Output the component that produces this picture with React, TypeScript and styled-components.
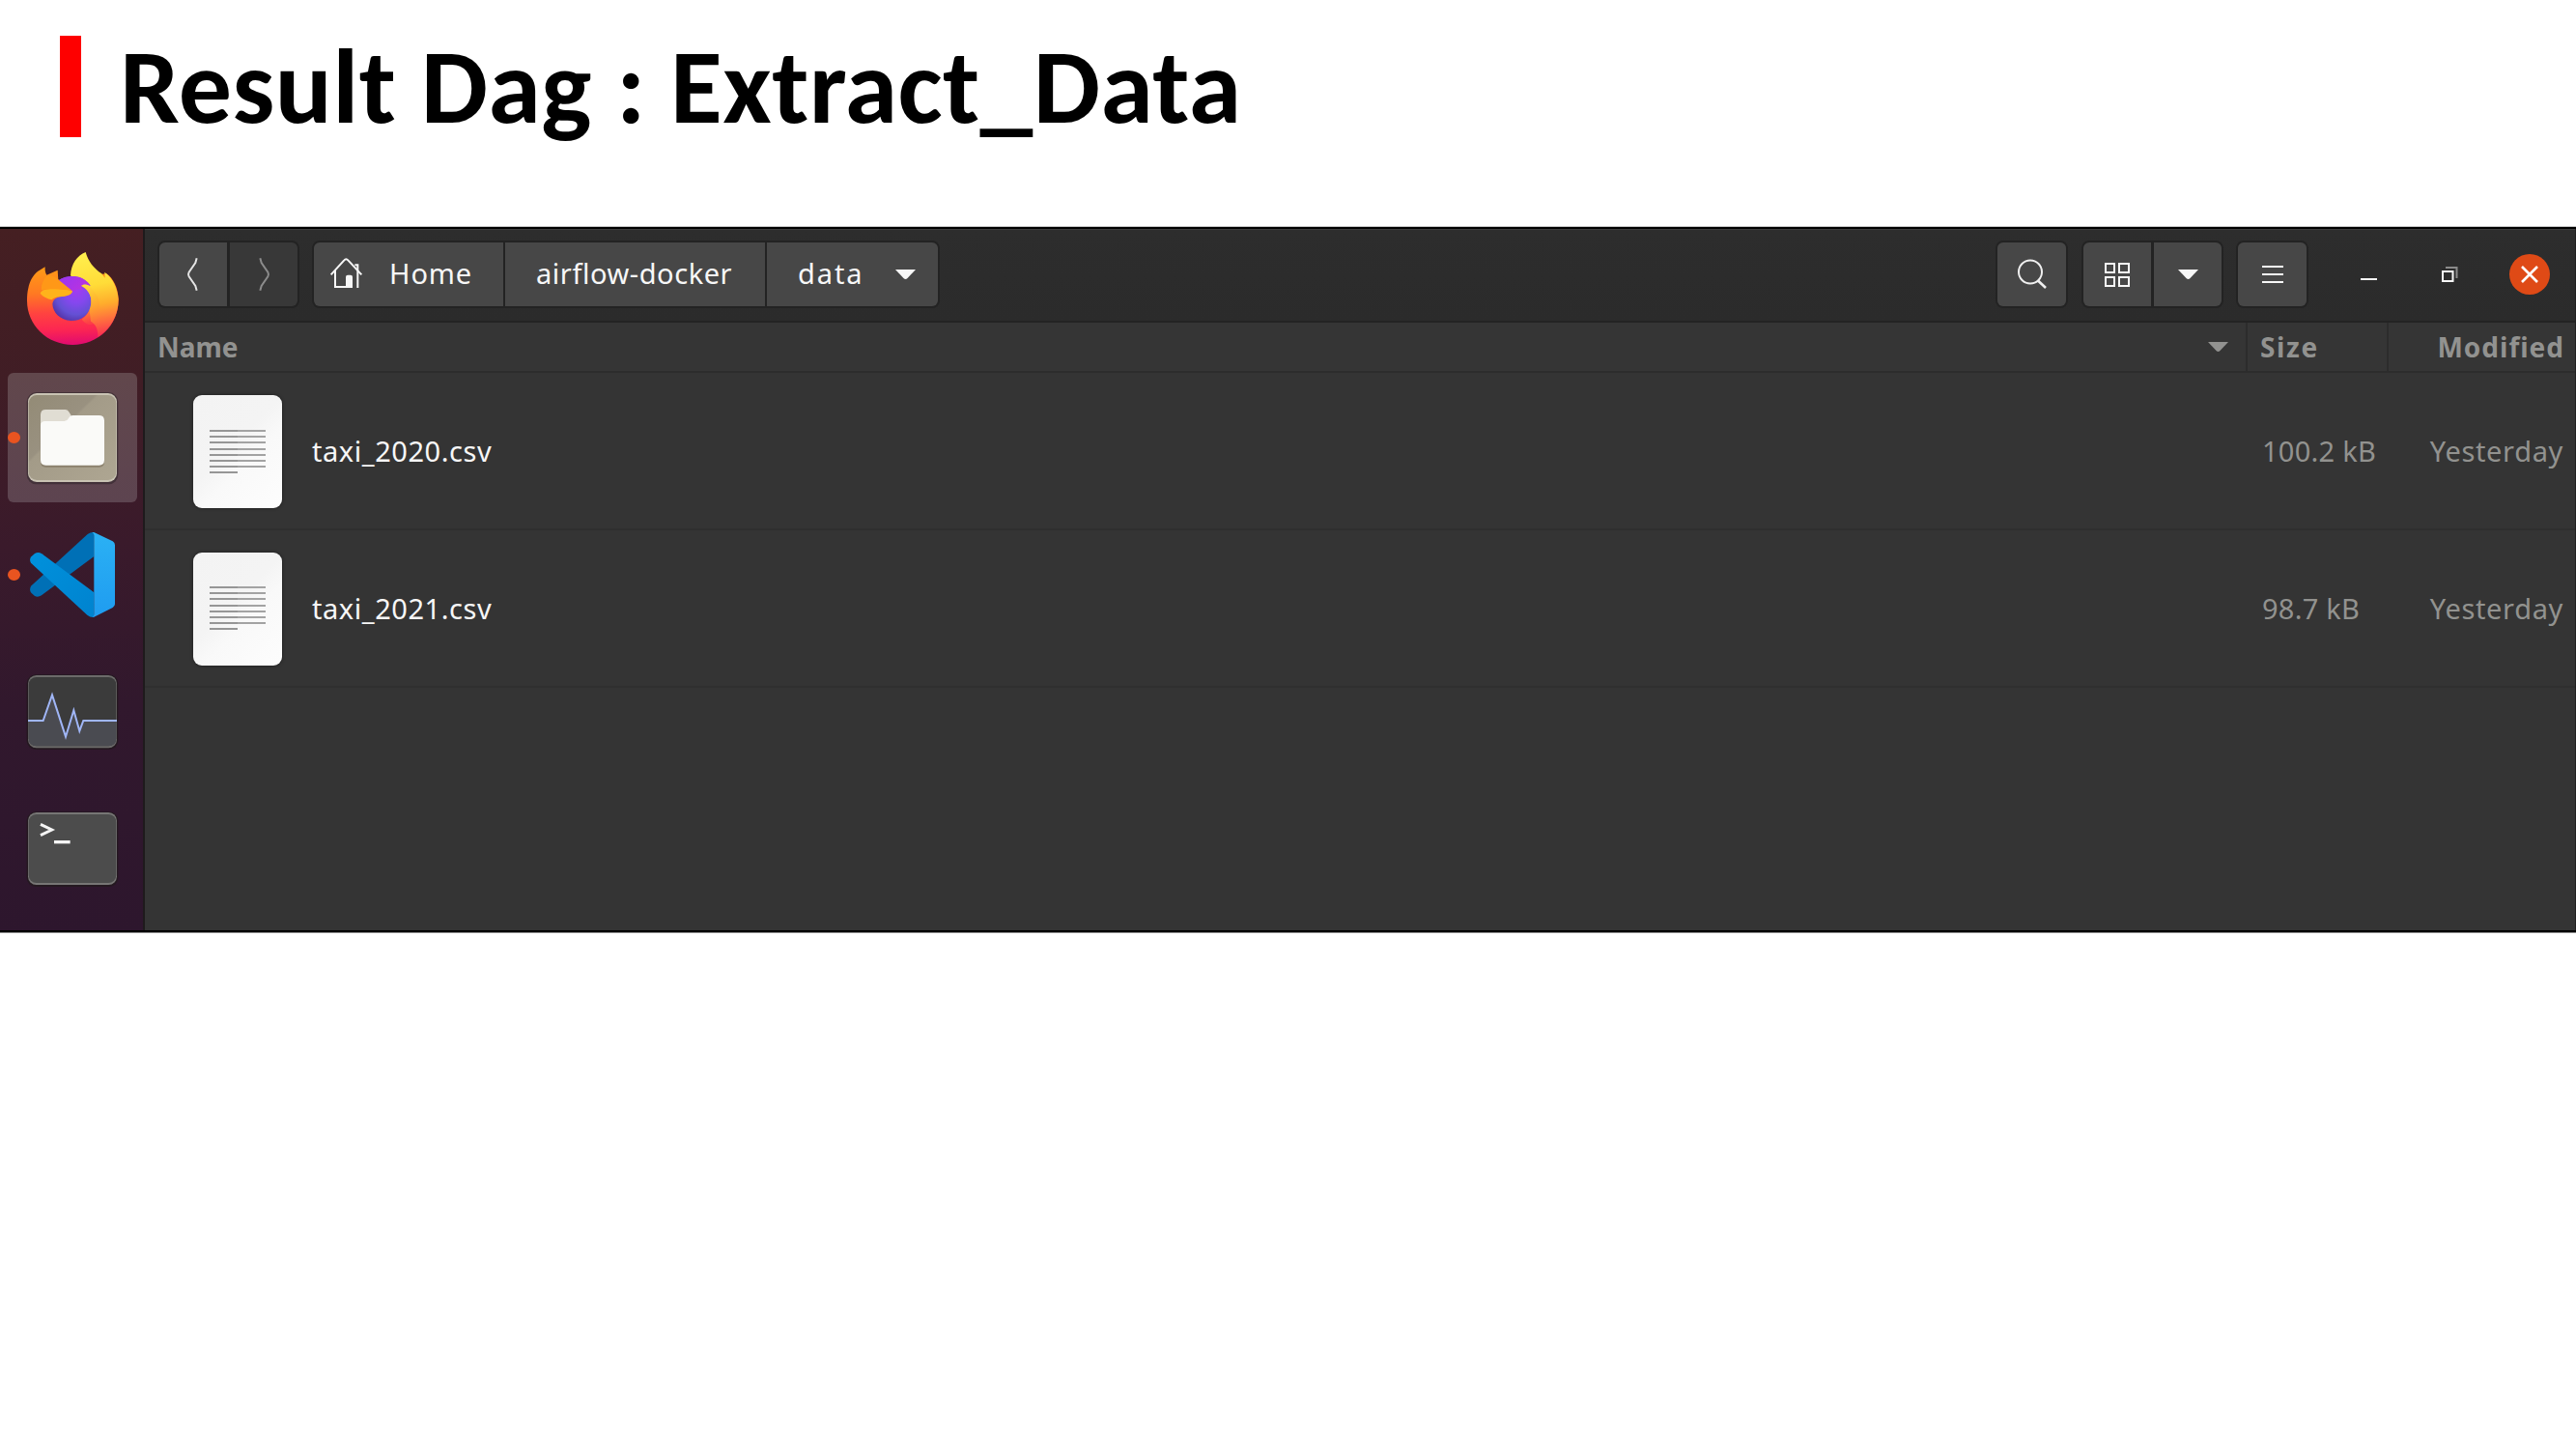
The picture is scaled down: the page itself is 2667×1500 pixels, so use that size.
import React from "react";
import styled, { createGlobalStyle } from "styled-components";

const GlobalStyle = createGlobalStyle`
  * { box-sizing: border-box; }
  body { margin: 0; background: #fff; overflow: hidden; }
  svg { display: block; flex: none; }
`;

const Slide = styled.main`
  width: 2667px;
  height: 1500px;
  background: #fff;
  font-family: "Noto Sans", "Open Sans", sans-serif;
`;

const Heading = styled.header`
  display: flex;
  height: 235px;
  padding: 37px 0 0 62px;
  gap: 40px;
`;

const Accent = styled.div`
  width: 22px;
  height: 105px;
  background: #fe0000;
`;

const Title = styled.h1`
  margin: 0;
  height: 105px;
  line-height: 105px;
  font-family: Carlito, Lato, sans-serif;
  font-size: 110px;
  font-weight: 700;
  letter-spacing: 0.43px;
  color: #000;
  white-space: pre;
`;

const Capture = styled.section`
  display: flex;
  height: 730px;
  border-top: 2px solid #000;
  border-bottom: 2px solid #000;
  box-shadow: 0 -1px 0 #c4c4c4, 0 1px 0 #8a8a8a;
`;

const Dock = styled.nav`
  display: flex;
  flex-direction: column;
  align-items: center;
  gap: 8px;
  width: 150px;
  padding: 7px 0 0 2px;
  border-right: 2px solid #1e1a1c;
  background: linear-gradient(178deg, #451f22 0%, #401d25 22%, #3a1a2b 45%, #31182d 68%, #2d162d 100%);
`;

const DockTile = styled.div<{ $active?: boolean }>`
  position: relative;
  display: flex;
  align-items: center;
  justify-content: center;
  flex: none;
  width: 134px;
  height: 134px;
  border-radius: 6px;
  background: ${(p) => (p.$active ? "linear-gradient(#61474c, #5d4450)" : "transparent")};
`;

const RunningDot = styled.span`
  position: absolute;
  left: 0;
  top: 61px;
  width: 13px;
  height: 12px;
  border-radius: 50%;
  background: #e95420;
`;

const Files = styled.div`
  display: flex;
  flex-direction: column;
  flex: 1;
  background: #343434;
  border-right: 1px solid #202020;
`;

const Toolbar = styled.div`
  display: flex;
  align-items: center;
  height: 97px;
  padding: 0 26px 3px 13px;
  border-top: 1px solid #3d3d3d;
  border-bottom: 2px solid #232323;
  background: linear-gradient(#2d2d2d, #2b2b2b);
`;

const ButtonGroup = styled.div<{ $gap?: number }>`
  display: flex;
  height: 70px;
  margin-left: ${(p) => p.$gap ?? 0}px;
  border: 2px solid #232323;
  border-radius: 8px;
  background: #232323;
  overflow: hidden;
`;

const ToolButton = styled.button<{ $w: number; $off?: boolean; $line?: number }>`
  display: flex;
  align-items: center;
  justify-content: center;
  width: ${(p) => p.$w}px;
  height: 66px;
  margin: 0 0 0 ${(p) => p.$line ?? 0}px;
  padding: 0;
  border: 0;
  background: ${(p) => (p.$off ? "#383838" : "#474747")};
  color: #f7f7f7;
`;

const Crumb = styled.button<{ $w: number; $pad: number; $line?: number; $spacing: number }>`
  display: flex;
  align-items: center;
  width: ${(p) => p.$w}px;
  height: 66px;
  margin: 0 0 0 ${(p) => p.$line ?? 0}px;
  padding: 0 0 0 ${(p) => p.$pad}px;
  border: 0;
  background: #474747;
  color: #f7f7f7;
  font: 400 29px/40px "Noto Sans", "Open Sans", sans-serif;
  letter-spacing: ${(p) => p.$spacing}px;
  text-align: left;
  white-space: nowrap;
`;

const CrumbText = styled.span<{ $w: number }>`
  width: ${(p) => p.$w}px;
  padding-bottom: 2px;
`;

const Grow = styled.div`
  flex: 1;
`;

const WindowButtons = styled.div`
  display: flex;
  align-items: center;
  justify-content: space-between;
  width: 196px;
  margin-left: 54px;
`;

const RestoreSlot = styled.div`
  padding-left: 14px;
`;

const CloseButton = styled.button`
  display: flex;
  align-items: center;
  justify-content: center;
  width: 42px;
  height: 42px;
  padding: 0;
  border: 0;
  border-radius: 50%;
  background: #df4a16;
`;

const columns = "2175px 146px 1fr";

const ColumnHeads = styled.div`
  display: grid;
  grid-template-columns: ${columns};
  height: 52px;
  border-bottom: 2px solid #2c2c2c;
  background: #353535;
  color: #929290;
  font-size: 28px;
  font-weight: 700;
`;

const Head = styled.div<{ $pad: number; $line?: boolean; $spacing: number; $end?: boolean }>`
  display: flex;
  align-items: center;
  justify-content: ${(p) => (p.$end ? "flex-end" : "space-between")};
  padding: 0 ${(p) => (p.$end ? 11 : 18)}px 0 ${(p) => p.$pad}px;
  border-left: ${(p) => (p.$line ? "2px solid #2c2c2c" : "0")};
  letter-spacing: ${(p) => p.$spacing}px;
`;

const Row = styled.div`
  display: grid;
  grid-template-columns: ${columns};
  align-items: center;
  height: 163px;
  border-bottom: 2px solid #2f2f2f;
  font-size: 29px;
  color: #92928f;
  white-space: nowrap;
`;

const NameCell = styled.div`
  display: flex;
  align-items: center;
  gap: 31px;
  padding-left: 50px;
  color: #f7f7f7;
  letter-spacing: 0.55px;
`;

const Sheet = styled.div<{ $lead: number }>`
  display: flex;
  flex-direction: column;
  gap: 4.2px;
  width: 92px;
  height: 117px;
  margin: 2px 0 0;
  padding: ${(p) => p.$lead}px 17px 0;
  border-radius: 9px;
  background: linear-gradient(135deg, #f3f3f3 0%, #f4f4f4 45%, #f9f9f9 60%, #fdfdfd 100%);
  box-shadow: 0 0 3px 1px rgba(0, 0, 0, 0.28);
`;

const SheetLine = styled.i<{ $w: number }>`
  width: ${(p) => p.$w}px;
  height: 2px;
  background: linear-gradient(90deg, #969696 0 29px, #a3a3a3 29px);
`;

const SizeCell = styled.div`
  padding-left: 17px;
  letter-spacing: 0.25px;
`;

const DateCell = styled.div`
  padding-right: 12px;
  text-align: right;
  letter-spacing: 0.65px;
`;

const FirefoxIcon = () => (
  <svg width="102" height="102" viewBox="72 90 306 306">
    <defs>
      <linearGradient id="ffLeft" x1="0.45" y1="0" x2="0.5" y2="1">
        <stop offset="0" stopColor="#ff9a16" />
        <stop offset="0.32" stopColor="#ff7a22" />
        <stop offset="0.58" stopColor="#ff4340" />
        <stop offset="0.8" stopColor="#fc2652" />
        <stop offset="1" stopColor="#e00a70" />
      </linearGradient>
      <linearGradient id="ffFlame" x1="0.3" y1="0" x2="0.4" y2="1">
        <stop offset="0" stopColor="#fff04e" />
        <stop offset="0.4" stopColor="#ffdc38" />
        <stop offset="0.64" stopColor="#ffac2c" />
        <stop offset="0.84" stopColor="#ff6a40" />
        <stop offset="1" stopColor="#fb3350" />
      </linearGradient>
      <radialGradient id="ffGlobe" cx="0.62" cy="0.3" r="0.75">
        <stop offset="0" stopColor="#a33bf0" />
        <stop offset="0.4" stopColor="#8547ee" />
        <stop offset="0.75" stopColor="#6450d4" />
        <stop offset="1" stopColor="#5434a8" />
      </radialGradient>
      <linearGradient id="ffTop" x1="0" y1="0" x2="1" y2="0.5">
        <stop offset="0" stopColor="#9a35f0" />
        <stop offset="1" stopColor="#b833e0" />
      </linearGradient>
      <linearGradient id="ffCurl" x1="0" y1="0" x2="0.2" y2="1">
        <stop offset="0" stopColor="#ffdf3c" />
        <stop offset="0.5" stopColor="#ffb52f" />
        <stop offset="1" stopColor="#ff7a35" stopOpacity="0.2" />
      </linearGradient>
    </defs>
    <path d="M88 205C92 182 103 165 117 153L140 139C139 150 141 158 145 164L179 149L181 180L224 172L331 160C352 174 367 205 368 240C369 322 302 381 226 381C146 381 84 320 84 244C84 230 85 217 88 205Z" fill="url(#ffLeft)" />
    <path d="M219 166C221 128 240 104 266 93C274 122 291 143 316 160L326 173L325 155C350 173 365 205 368 239C368 292 341 333 304 357C305 330 296 316 282 308L270 205Z" fill="url(#ffFlame)" />
    <path d="M181 181C194 171 213 167 231 168C253 170 272 182 281 198C266 191 258 192 252 198C273 207 285 226 283 252C279 289 252 307 220 306C187 303 164 281 163 254C165 240 176 233 190 231C207 229 222 226 224 216Z" fill="url(#ffGlobe)" />
    <path d="M181 182C194 171 213 167 231 168C253 170 272 182 281 198C266 191 258 192 252 198L256 212C246 206 238 207 224 216Z" fill="url(#ffTop)" />
    <path d="M252 197C266 191 281 199 292 215C316 244 316 285 295 311C286 321 268 321 254 302C274 288 287 262 283 238C280 220 268 206 252 197Z" fill="url(#ffCurl)" />
    <path d="M125 221C130 208 149 206 172 207C193 208 212 209 225 214C223 227 204 231 186 232C174 233 166 236 161 241C148 238 133 232 125 221Z" fill="#ffb31b" />
    <path d="M145 167C161 163 174 171 186 182L224 213C197 208 155 206 128 211C128 193 134 178 145 167Z" fill="#ff9817" />
  </svg>
);

const FilesIcon = () => (
  <svg width="102" height="102" viewBox="72 516 306 306">
    <defs>
      <linearGradient id="fmTile" x1="0" y1="0" x2="1" y2="1">
        <stop offset="0" stopColor="#938b76" />
        <stop offset="0.38" stopColor="#999180" />
        <stop offset="0.4" stopColor="#a39b88" />
        <stop offset="1" stopColor="#aea692" />
      </linearGradient>
    </defs>
    <rect x="83" y="528" width="284" height="286" rx="30" fill="#2e2328" opacity="0.55" />
    <rect x="87" y="531" width="276" height="276" rx="27" fill="#c9c3b3" />
    <rect x="89" y="537" width="272" height="264" rx="25" fill="url(#fmTile)" />
    <path d="M126 745V600Q126 582 144 582H203Q210 582 214 589L221 600H308Q324 600 324 616V745Q324 761 308 761H142Q126 761 126 745Z" fill="#7f735f" opacity="0.7" />
    <path d="M126 640V598Q126 582 142 582H203Q210 582 214 589L221 600V640Z" fill="#e0ddd3" />
    <path d="M126 739V632Q126 618 140 618H200Q208 618 213 609Q217 600 226 600H308Q324 600 324 616V739Q324 755 308 755H142Q126 755 126 739Z" fill="#fafaf8" />
  </svg>
);

const CodeIcon = () => (
  <svg width="102" height="102" viewBox="72 72 306 306">
    <defs>
      <linearGradient id="vsPanel" x1="0" y1="0" x2="0" y2="1">
        <stop offset="0" stopColor="#2bb1f4" />
        <stop offset="1" stopColor="#1f9cf0" />
      </linearGradient>
      <linearGradient id="vsDown" x1="0" y1="0" x2="1" y2="1">
        <stop offset="0" stopColor="#0091dc" />
        <stop offset="1" stopColor="#0083cf" />
      </linearGradient>
    </defs>
    <path d="M96 260Q90 272 97 281L108 291Q118 296 129 289L292 168V93Q281 92 272 99Z" fill="#0070b6" />
    <path d="M97 169L108 159Q119 153 130 160L292 280V357Q280 358 271 350L96 188Q90 178 97 169Z" fill="url(#vsDown)" />
    <path d="M290 93Q293 93 298 96L350 121Q357 125 357 133V316Q357 323 350 327L298 353Q294 356 288 357Q292 353 292 348V102Q292 96 286 93Z" fill="url(#vsPanel)" />
  </svg>
);

const MonitorIcon = () => (
  <svg width="102" height="102" viewBox="72 498 306 306">
    <rect x="83" y="535" width="284" height="233" rx="28" fill="#241820" />
    <rect x="87" y="537" width="276" height="226" rx="26" fill="#6c6b6a" />
    <rect x="89" y="543" width="272" height="214" rx="24" fill="#3b3b3b" />
    <path d="M89 678H134L162 598L204 728L229 646L247 710L259 678H361V733Q361 757 337 757H113Q89 757 89 733Z" fill="#4a4b51" />
    <path d="M87 678H134L162 598L204 728L229 646L247 710L259 678H363" fill="none" stroke="#a0b6f7" strokeWidth="6" />
  </svg>
);

const TerminalIcon = () => (
  <svg width="102" height="102" viewBox="72 924 306 306">
    <rect x="83" y="961" width="284" height="233" rx="28" fill="#241820" />
    <rect x="87" y="963" width="276" height="225" rx="26" fill="#777675" />
    <rect x="89" y="969" width="272" height="213" rx="24" fill="#4c4c4c" />
    <path d="M126 1000L161 1017L126 1034" fill="none" stroke="#f4f4f4" strokeWidth="9" />
    <path d="M168 1055H218" stroke="#f4f4f4" strokeWidth="10" />
  </svg>
);

const HomeIcon = () => (
  <svg width="36" height="40" viewBox="573 87 108 120" fill="none" stroke="#f7f7f7" strokeWidth="6">
    <path d="M578 151L619 106Q625 99 631 106L673 151" />
    <path d="M591 138V189H642" />
    <path d="M661 192V118M652 121H661" />
    <path d="M624 192V158Q624 152 630 152H639Q645 152 645 158V192Z" fill="#f7f7f7" stroke="none" />
  </svg>
);

const Caret = ({ color = "#f7f7f7" }: { color?: string }) => (
  <svg width="21" height="10" viewBox="0 0 21 10">
    <path d="M0 0H21L12.5 9Q10.5 11 8.5 9Z" fill={color} />
  </svg>
);

const BackIcon = () => (
  <svg width="40" height="40" viewBox="90 87 120 120">
    <path d="M161 97L157 111L137 140Q133 147 137 154L157 183L161 197" fill="none" stroke="#e4e4e4" strokeWidth="6" />
  </svg>
);

const ForwardIcon = () => (
  <svg width="40" height="40" viewBox="309 87 120 120">
    <path d="M358 97L362 111L382 140Q386 147 382 154L362 183L358 197" fill="none" stroke="#8c8c8c" strokeWidth="6" />
  </svg>
);

const SearchIcon = () => (
  <svg width="40" height="40" viewBox="0 0 40 40" fill="none" stroke="#efefef" strokeWidth="2">
    <circle cx="18" cy="17.5" r="12" />
    <path d="M26 26.5L34 34" strokeWidth="2.6" />
  </svg>
);

const GridIcon = () => (
  <svg width="26" height="26" viewBox="0 0 26 26" fill="none" stroke="#f7f7f7" strokeWidth="2">
    <path d="M1 2H10V11H1ZM15 2H25V11H15ZM1 16H10V25H1ZM15 16H25V25H15Z" />
  </svg>
);

const MenuIcon = () => (
  <svg width="22" height="18" viewBox="0 0 22 18" fill="#f7f7f7">
    <path d="M0 0H22V2H0ZM0 8H22V10H0ZM0 16H22V18H0Z" />
  </svg>
);

const MinimizeIcon = () => (
  <svg width="17" height="20" viewBox="0 0 17 20">
    <path d="M0 14H17V16H0Z" fill="#f7f7f7" />
  </svg>
);

const RestoreIcon = () => (
  <svg width="17" height="16" viewBox="0 0 17 16" fill="none">
    <path d="M4 1H15.5V12" stroke="#8b8b8b" strokeWidth="2" />
    <path d="M1 5H11.5V15H1Z" stroke="#f7f7f7" strokeWidth="2" />
  </svg>
);

const CloseIcon = () => (
  <svg width="18" height="18" viewBox="0 0 18 18">
    <path d="M1 1L17 17M17 1L1 17" stroke="#fff" strokeWidth="2.6" />
  </svg>
);

const files = [
  { name: "taxi_2020.csv", size: "100.2 kB", date: "Yesterday", lead: 36 },
  { name: "taxi_2021.csv", size: "98.7 kB", date: "Yesterday", lead: 35 },
];

export default function App() {
  return (
    <Slide>
      <GlobalStyle />
      <Heading>
        <Accent />
        <Title>Result Dag : Extract_Data</Title>
      </Heading>
      <Capture>
        <Dock>
          <DockTile><FirefoxIcon /></DockTile>
          <DockTile $active><FilesIcon /><RunningDot /></DockTile>
          <DockTile><CodeIcon /><RunningDot /></DockTile>
          <DockTile><MonitorIcon /></DockTile>
          <DockTile><TerminalIcon /></DockTile>
        </Dock>
        <Files>
          <Toolbar>
            <ButtonGroup>
              <ToolButton $w={70}><BackIcon /></ToolButton>
              <ToolButton $w={70} $line={3} $off><ForwardIcon /></ToolButton>
            </ButtonGroup>
            <ButtonGroup $gap={13}>
              <Crumb $w={196} $pad={16} $spacing={0.9}>
                <CrumbText $w={62}><HomeIcon /></CrumbText>
                <CrumbText $w={90}>Home</CrumbText>
              </Crumb>
              <Crumb $w={269} $pad={32} $line={2} $spacing={0.55}>
                <CrumbText $w={220}>airflow-docker</CrumbText>
              </Crumb>
              <Crumb $w={177} $pad={32} $line={2} $spacing={1.9}>
                <CrumbText $w={101}>data</CrumbText>
                <Caret />
              </Crumb>
            </ButtonGroup>
            <Grow />
            <ButtonGroup>
              <ToolButton $w={71}><SearchIcon /></ToolButton>
            </ButtonGroup>
            <ButtonGroup $gap={14}>
              <ToolButton $w={70}><GridIcon /></ToolButton>
              <ToolButton $w={70} $line={3}><Caret /></ToolButton>
            </ButtonGroup>
            <ButtonGroup $gap={13}>
              <ToolButton $w={71}><MenuIcon /></ToolButton>
            </ButtonGroup>
            <WindowButtons>
              <MinimizeIcon />
              <RestoreSlot><RestoreIcon /></RestoreSlot>
              <CloseButton><CloseIcon /></CloseButton>
            </WindowButtons>
          </Toolbar>
          <ColumnHeads>
            <Head $pad={13} $spacing={0}>Name<Caret color="#929290" /></Head>
            <Head $pad={13} $spacing={1.6} $line>Size</Head>
            <Head $pad={13} $spacing={1} $line $end>Modified</Head>
          </ColumnHeads>
          {files.map((f) => (
            <Row key={f.name}>
              <NameCell>
                <Sheet $lead={f.lead}>
                  {[58, 58, 58, 58, 58, 58, 58, 29].map((w, i) => (
                    <SheetLine key={i} $w={w} />
                  ))}
                </Sheet>
                {f.name}
              </NameCell>
              <SizeCell>{f.size}</SizeCell>
              <DateCell>{f.date}</DateCell>
            </Row>
          ))}
        </Files>
      </Capture>
    </Slide>
  );
}
